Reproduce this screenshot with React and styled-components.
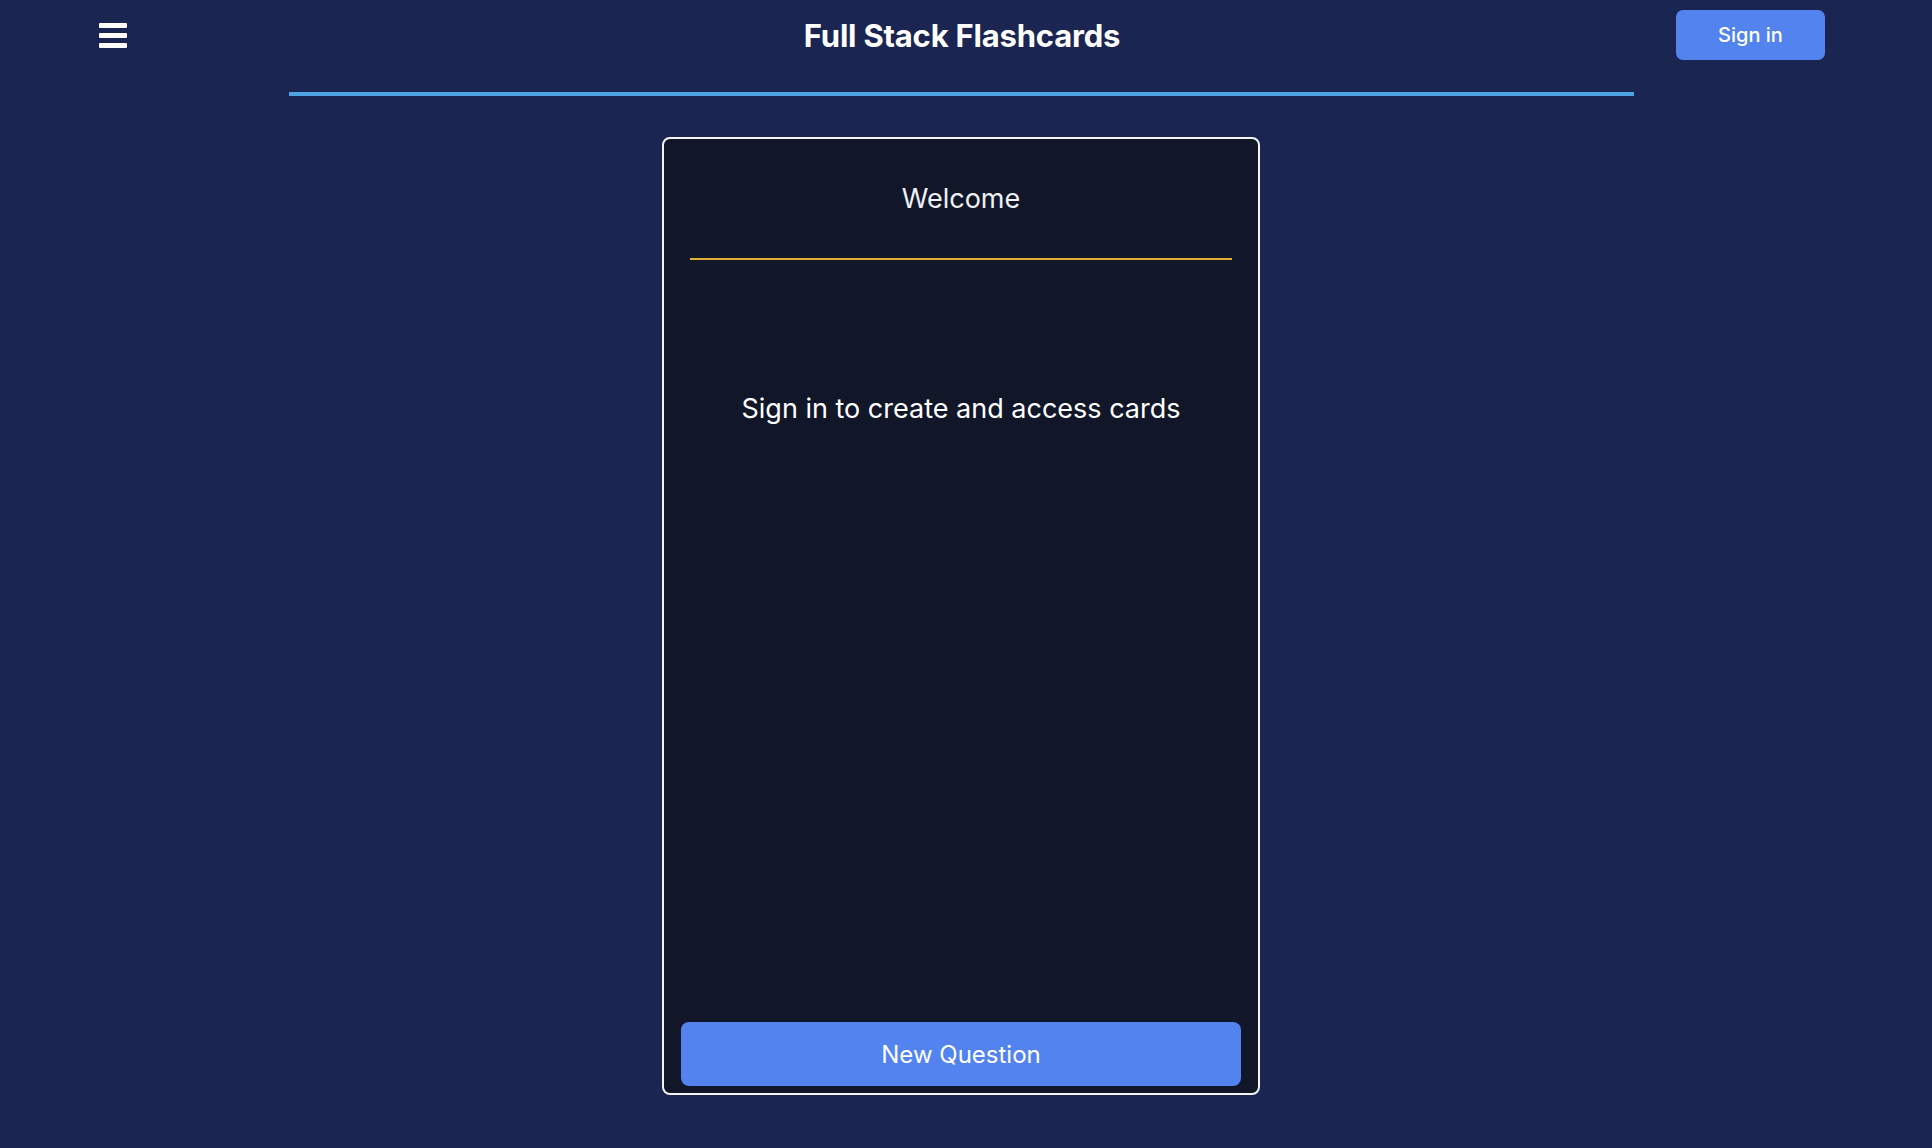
import React from "react";
import styled, { createGlobalStyle } from "styled-components";

const GlobalStyle = createGlobalStyle`
  html, body {
    margin: 0;
    padding: 0;
    background: #1b2552;
  }
  body {
    font-family: Inter, "Noto Sans", "Liberation Sans", sans-serif;
    color: #ffffff;
  }
  * { box-sizing: border-box; }
`;

const Page = styled.div`
  min-height: 100vh;
  background: #1b2552;
  padding-right: 10px;
  display: flex;
  flex-direction: column;
  align-items: center;
`;

const Header = styled.header`
  width: 100%;
  height: 70px;
  padding: 0 97px 0 99px;
  display: grid;
  grid-template-columns: 1fr auto 1fr;
  align-items: center;
`;

const MenuButton = styled.button`
  justify-self: start;
  background: none;
  border: none;
  padding: 0;
  width: 28px;
  height: 25px;
  cursor: pointer;
  display: flex;
`;

const Title = styled.h1`
  margin: 0;
  font-size: 31px;
  font-weight: 700;
  color: #ffffff;
  letter-spacing: -0.2px;
`;

const SignInButton = styled.button`
  justify-self: end;
  width: 149px;
  height: 50px;
  border: none;
  border-radius: 7px;
  background: #5283ef;
  color: #ffffff;
  font-family: inherit;
  font-size: 20px;
  font-weight: 500;
  cursor: pointer;
`;

const TopRule = styled.div`
  width: 1345px;
  height: 4px;
  margin-top: 22px;
  background: #4fa3e3;
`;

const Card = styled.section`
  width: 598px;
  height: 958px;
  margin-top: 41px;
  border: 2px solid #f4f4f6;
  border-radius: 8px;
  background: #111729;
  padding: 0 17px 7px;
  display: flex;
  flex-direction: column;
`;

const CardTitle = styled.div`
  height: 119px;
  display: flex;
  align-items: center;
  justify-content: center;
  font-size: 27px;
  font-weight: 400;
  color: #eef0f5;
`;

const AccentRule = styled.div`
  height: 2px;
  margin: 0 9px;
  background: #e5ae37;
`;

const Message = styled.p`
  margin: 133px 0 0;
  text-align: center;
  font-size: 27px;
  line-height: 32px;
  color: #ffffff;
`;

const NewQuestionButton = styled.button`
  margin-top: auto;
  width: 100%;
  height: 64px;
  border: none;
  border-radius: 8px;
  background: #5283ef;
  color: #ffffff;
  font-family: inherit;
  font-size: 24px;
  cursor: pointer;
`;

const MenuIcon = () => (
  <svg width="28" height="25" viewBox="0 0 28 25" aria-hidden="true">
    <rect x="0" y="0" width="28" height="5" rx="1" fill="#ffffff" />
    <rect x="0" y="10" width="28" height="5" rx="1" fill="#ffffff" />
    <rect x="0" y="20" width="28" height="5" rx="1" fill="#ffffff" />
  </svg>
);

export default function App() {
  return (
    <>
      <GlobalStyle />
      <Page>
        <Header>
          <MenuButton aria-label="Menu">
            <MenuIcon />
          </MenuButton>
          <Title>Full Stack Flashcards</Title>
          <SignInButton>Sign in</SignInButton>
        </Header>
        <TopRule />
        <Card>
          <CardTitle>Welcome</CardTitle>
          <AccentRule />
          <Message>Sign in to create and access cards</Message>
          <NewQuestionButton>New Question</NewQuestionButton>
        </Card>
      </Page>
    </>
  );
}
